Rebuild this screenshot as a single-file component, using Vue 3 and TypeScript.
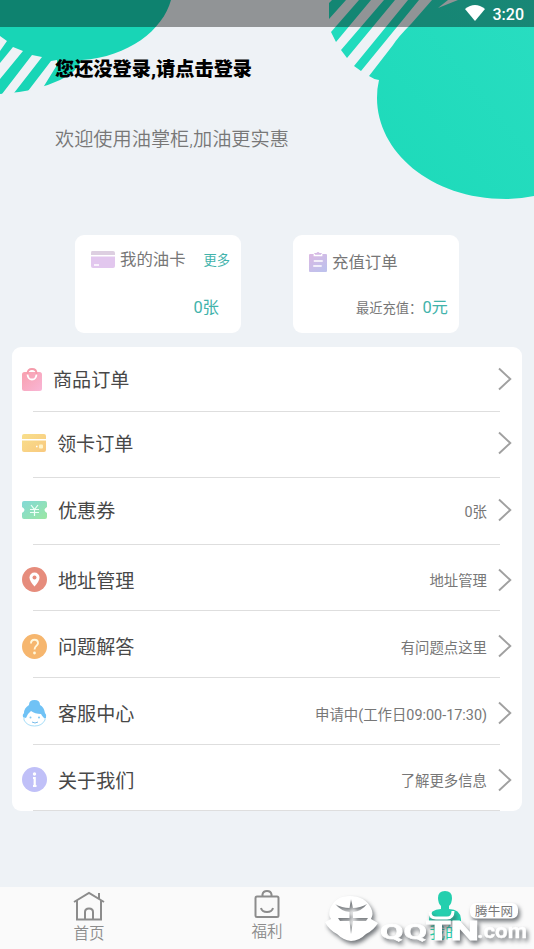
<script setup lang="ts">
interface Row {
  icon: string
  title: string
  note: string
}

const rows: Row[] = [
  { icon: 'bag', title: '商品订单', note: '' },
  { icon: 'card', title: '领卡订单', note: '' },
  { icon: 'coupon', title: '优惠券', note: '0张' },
  { icon: 'pin', title: '地址管理', note: '地址管理' },
  { icon: 'help', title: '问题解答', note: '有问题点这里' },
  { icon: 'service', title: '客服中心', note: '申请中(工作日09:00-17:30)' },
  { icon: 'info', title: '关于我们', note: '了解更多信息' },
]
</script>

<template>
  <div class="screen">
    <svg class="decor" width="534" height="220" viewBox="0 0 534 220">
      <defs>
        <linearGradient id="blob" x1="0" y1="1" x2="1" y2="0">
          <stop offset="0" stop-color="#1cdab9" />
          <stop offset="1" stop-color="#29ddc1" />
        </linearGradient>
      </defs>
      <path d="M0 0H171C163 30 128 57 82 60Q76 73 60 80Q35 92 0 94Z" fill="#18d5b6" />
      <path d="M0 36L7 41L0 51ZM13 47L23 51L0 79V63ZM32 55L42 57L14 93L13 96H0L2 94ZM51 61L57 60V65L44 86L43 90L28 91Z" fill="#eef2f6" />
      <path d="M329 3L332 0H346L329 19ZM331 32L336 42L371 0H359ZM341 50L347 58L395 0H384ZM354 66L361 71L419 0H408Z" fill="#20dbbd" />
      <path d="M432 0H534V196Q520 199 506 199C430 199 377 151 377 98Q377 88 379 80Q373 79 369 76L393 45Q398 37 411 24Z" fill="url(#blob)" />
      <path d="M438 8Q448 4 458 0H448Z" fill="#eef2f6" />
    </svg>

    <div class="status">
      <svg width="20" height="17" viewBox="0 0 20 17"><path d="M0 4Q10-4 20 4L10 16Z" fill="#fff" /></svg>
      <span>3:20</span>
    </div>

    <header class="hero">
      <h1>您还没登录,请点击登录</h1>
      <p>欢迎使用油掌柜,加油更实惠</p>
    </header>

    <section class="cards">
      <article class="tile">
        <div class="tile-head">
          <svg width="24" height="17" viewBox="0 0 24 17">
            <path d="M1 0H22Q24 0 24 2V4H0V2Q0 0 1 0Z" fill="#ddcfe1" />
            <path d="M0 5.500H24V15Q24 17 22 17H2Q0 17 0 15Z" fill="#e2c7ee" />
            <path d="M3 14H8" stroke="#fff" stroke-width="1.500" />
          </svg>
          <span class="tile-name">我的油卡</span>
          <a class="more">更多</a>
        </div>
        <div class="value">0张</div>
      </article>
      <article class="tile second">
        <div class="tile-head">
          <svg width="18" height="20" viewBox="0 0 17 20" preserveAspectRatio="none">
            <defs>
              <linearGradient id="clip" x1="0" y1="0" x2="0.6" y2="1">
                <stop offset="0" stop-color="#deb8e2" />
                <stop offset="1" stop-color="#bfc1ec" />
              </linearGradient>
            </defs>
            <path d="M1 2H5V1H7Q8.500 -1 10 1H12V2H16Q17 2 17 3V19Q17 20 16 20H1Q0 20 0 19V3Q0 2 1 2Z" fill="url(#clip)" />
            <path d="M5 2V3.500H12V2M4.500 9H13M4 14H12" fill="none" stroke="#fff" stroke-width="1.300" />
          </svg>
          <span class="tile-name">充值订单</span>
        </div>
        <div class="value"><small>最近充值：</small>0元</div>
      </article>
    </section>

    <main class="list">
      <div v-for="row in rows" :key="row.icon" class="row" :class="row.icon">
        <svg v-if="row.icon === 'bag'" class="icon" width="20" height="23" viewBox="0 0 20 23">
          <defs><linearGradient id="pink" x1="0" y1="0" x2="1" y2="1"><stop offset="0" stop-color="#f8a0ae" /><stop offset="1" stop-color="#f9b6d6" /></linearGradient></defs>
          <rect y="4" width="20" height="19" rx="2.500" fill="url(#pink)" />
          <path d="M5.500 7V5.500Q5.500 1 10 1T14.500 5.500V7" fill="none" stroke="#f59bab" stroke-width="1.800" />
          <path d="M5.500 6.500Q6 11.500 10 11.500T14.500 6.500" fill="none" stroke="#fff" stroke-width="1.800" />
        </svg>
        <svg v-else-if="row.icon === 'card'" class="icon" width="24" height="18" viewBox="0 0 24 18">
          <defs><linearGradient id="gold" x1="0" y1="0" x2="1" y2="1"><stop offset="0" stop-color="#f8df8c" /><stop offset="1" stop-color="#f9c97f" /></linearGradient></defs>
          <path d="M2 0H22Q24 0 24 2V5H0V2Q0 0 2 0ZM0 6.500H24V16Q24 18 22 18H2Q0 18 0 16Z" fill="url(#gold)" />
          <path d="M14 12.500H15.500" stroke="#fff" stroke-width="1.500" /><rect x="17" y="10.500" width="4" height="4" rx="1" fill="#fff5cb" />
        </svg>
        <svg v-else-if="row.icon === 'coupon'" class="icon" width="25" height="18" viewBox="0 0 25 18">
          <defs><linearGradient id="mint" x1="0" y1="0" x2="1" y2="1"><stop offset="0" stop-color="#83d9d7" /><stop offset="1" stop-color="#9be7a2" /></linearGradient></defs>
          <path d="M2 0H23Q25 0 25 2V6Q20 9 25 12V16Q25 18 23 18H2Q0 18 0 16V12Q5 9 0 6V2Q0 0 2 0Z" fill="url(#mint)" />
          <path d="M9 4L12.500 8.500L16 4M8 8.500H17M8 11.500H17M12.500 8.500V15" fill="none" stroke="#effff7" stroke-width="1.200" />
        </svg>
        <svg v-else-if="row.icon === 'pin'" class="icon" width="25" height="25" viewBox="0 0 25 25">
          <circle cx="12.500" cy="12.500" r="12.500" fill="#e68c7c" />
          <path d="M12.500 19.500Q7.500 14 7.500 10.500A5 5 0 0 1 17.500 10.500Q17.500 14 12.500 19.500Z" fill="#fff" /><circle cx="12.500" cy="10.500" r="2" fill="#e68c7c" />
        </svg>
        <svg v-else-if="row.icon === 'help'" class="icon" width="25" height="25" viewBox="0 0 25 25">
          <circle cx="12.500" cy="12.500" r="12.500" fill="#f6b66e" />
          <path d="M9 9.500Q9 5.800 12.500 5.800T16 9.300C16 11.500 12.500 12 12.500 15.500" fill="none" stroke="#fff8dd" stroke-width="1.900" /><circle cx="12.500" cy="19" r="1.400" fill="#fff8dd" />
        </svg>
        <svg v-else-if="row.icon === 'service'" class="icon" width="25" height="27" viewBox="0 0 25 27">
          <path d="M2 14V20Q5 26 12.500 26T23 20V14" fill="#fff" stroke="#91d4f5" stroke-width=".8" />
          <path d="M7 5Q7 0 12.500 0T18 5Q22 7 23 13Q25 15 24 18L22 18Q20 16 19 14Q13 14 9 11Q5 14 4 18L1 17Q0 15 2 13Q2 8 7 5Z" fill="#70c2f5" />
          <circle cx="8.500" cy="17.500" r="1" fill="#81c9f2" /><circle cx="17" cy="17.500" r="1" fill="#81c9f2" />
          <path d="M10 22Q13 24 16 22" fill="none" stroke="#75bae9" />
        </svg>
        <svg v-else class="icon" width="25" height="25" viewBox="0 0 25 25">
          <circle cx="12.500" cy="12.500" r="12.500" fill="#c0c0f8" />
          <circle cx="12.500" cy="7" r="1.700" fill="#fff" /><path d="M11 11H12.700V19M11 19H14.500" fill="none" stroke="#fff" stroke-width="2.200" />
        </svg>
        <span class="title">{{ row.title }}</span>
        <span class="note">{{ row.note }}</span>
        <svg class="arrow" width="14" height="24" viewBox="0 0 14 24"><path d="M1 1.500L12.300 12L1 22.500" fill="none" stroke="#a0a0a0" stroke-width="1.900" /></svg>
      </div>
    </main>

    <nav class="tabs">
      <a class="tab home">
        <svg width="32" height="31" viewBox="0 0 32 31" fill="none" stroke="#8c8c8c" stroke-width="2">
          <path d="M1 12L16 3L31 12M4 10V29.500H28V10M26 9V3M12 29V22Q12 18.500 16 18.500T20 22V29" />
        </svg>
        <span>首页</span>
      </a>
      <a class="tab">
        <svg width="26" height="30" viewBox="0 0 26 30" fill="none" stroke="#8c8c8c" stroke-width="2">
          <rect x="1.500" y="7.500" width="23" height="20.500" rx="1.500" /><path d="M8.500 7V5.500Q9 2 13 2T17.500 5.500V7M7 19Q8 23 13 23T19 19" />
        </svg>
        <span>福利</span>
      </a>
      <a class="tab mine">
        <svg width="34" height="32" viewBox="0 0 34 32">
          <path d="M17 1Q24 1 24 8Q24 13 21 16V19Q32 19 33 29V31H1V29Q2 19 13 19V16Q10 13 10 8Q10 1 17 1Z" fill="#23cfae" />
        </svg>
        <span>我的</span>
      </a>
    </nav>

    <svg class="watermark" width="210" height="60" viewBox="324 889 210 60">
      <g class="shadowed">
        <path fill-rule="evenodd" d="M325 922L331 919Q328 915 330 909Q335 896 350 896Q365 896 371 908Q374 914 371 919L378 923Q374 930 366 934Q359 941 351 941Q343 940 337 934Q329 930 325 922ZM351 899L349.500 908Q342 908 335 904Q341 911 349.500 912V918H338L340 921H349.500L351 934L353 921H366L368 918H353V912Q362 911 367 904Q360 908 353 908Z" fill="#fff" />
        <text class="brand" x="380" y="939" textLength="47" lengthAdjust="spacingAndGlyphs">QQ</text>
        <text class="brand tall" x="426" y="939.500" textLength="53" lengthAdjust="spacingAndGlyphs">TN</text>
        <text class="domain" x="477" y="938" textLength="50" lengthAdjust="spacingAndGlyphs">.com</text>
        <path d="M430 912Q430 918 436 918H447Q453 918 453 911" fill="none" stroke="#fff" stroke-width="3" />
        <rect x="470" y="903" width="48" height="15.500" rx="6" fill="#fff" />
      </g>
      <text class="site" x="475" y="915.500" textLength="38">腾牛网</text>
    </svg>
  </div>
</template>

<style>
body {
  margin: 0;
}
</style>

<style scoped>
.screen {
  position: relative;
  display: flex;
  flex-direction: column;
  box-sizing: border-box;
  width: 534px;
  height: 949px;
  overflow: hidden;
  background: #eef2f6;
  color: #777;
  font-family: Roboto, "Noto Sans CJK SC", sans-serif;
}
svg {
  display: block;
  flex: none;
}
.decor {
  position: absolute;
  left: 0;
  top: 0;
}
.status {
  position: relative;
  display: flex;
  justify-content: flex-end;
  align-items: center;
  gap: 8px;
  box-sizing: border-box;
  height: 27px;
  padding: 2px 10px 0 0;
  background: rgba(0, 0, 0, 0.39);
  color: #fff;
  font-size: 16px;
  font-weight: 500;
}
.status svg {
  margin-top: -2px;
}
.hero {
  position: relative;
  height: 208px;
  padding-left: 55px;
  box-sizing: border-box;
}
h1, p {
  margin: 0;
  font-size: 19.2px;
  line-height: 28px;
  white-space: nowrap;
}
h1 {
  padding-top: 29px;
  color: #000;
  font-weight: 900;
}
p {
  padding-top: 42px;
  font-weight: 350;
}
.cards {
  display: flex;
  gap: 52px;
  padding-left: 75px;
}
.tile {
  width: 166px;
  height: 98px;
  border-radius: 9px;
  background: #fff;
}
.tile-head {
  display: flex;
  align-items: center;
  height: 24px;
  padding: 12px 11px 0 16px;
  gap: 5px;
}
.second .tile-head {
  padding-top: 15px;
}
.tile-name {
  padding-top: 1px;
  font-size: 16.4px;
  line-height: 24px;
}
.more {
  margin-left: auto;
  color: #42b3ab;
  font-size: 13.3px;
}
.value {
  padding: 25px 22px 0 0;
  text-align: right;
  color: #42b3ab;
  font-size: 16.4px;
  line-height: 24px;
}
.second .value {
  padding: 22px 11px 0 0;
}
.value small {
  color: #777;
  font-size: 13.3px;
}
.list {
  display: grid;
  grid-template-rows: 65px 66px 67px 66px 67px 67px 66px;
  width: 510px;
  margin: 14px 0 0 12px;
  border-radius: 9px;
  background: #fff;
}
.row {
  display: flex;
  align-items: center;
  box-sizing: border-box;
  padding: 0 10px 1px 10px;
  background: linear-gradient(#dedede, #dedede) 21px 100% / 467px 1px no-repeat;
}
.card {
  padding-bottom: 4px;
}
.coupon {
  padding-bottom: 3px;
}
.pin, .help, .service, .info {
  padding-top: 4px;
}
.icon {
  margin-right: 11px;
}
.title {
  color: #484848;
  font-size: 19.1px;
}
.note {
  margin-left: auto;
  margin-right: 11px;
  font-size: 14.4px;
}
.tabs {
  display: grid;
  grid-template-columns: repeat(3, 178px);
  height: 62px;
  margin-top: auto;
  background: #fafafa;
}
.tab {
  display: flex;
  flex-direction: column;
  align-items: center;
  gap: 2px;
  padding-top: 2px;
  color: #8c8c8c;
  font-size: 15.5px;
  line-height: 23px;
  font-weight: 350;
}
.home {
  padding-top: 3px;
}
.mine {
  padding-top: 3px;
  color: #23cfae;
  font-weight: 400;
}
.mine span {
  margin-top: -2px;
}
.watermark {
  position: absolute;
  left: 324px;
  top: 889px;
}
.shadowed {
  filter: drop-shadow(2px 3px 2px rgba(70, 75, 80, 0.75));
}
.brand, .domain {
  fill: #fff;
  stroke: #fff;
  font-family: Roboto, sans-serif;
  font-weight: 700;
}
.brand {
  stroke-width: 0.6px;
  font-size: 21px;
}
.tall {
  stroke-width: 1px;
  font-size: 26px;
}
.domain {
  stroke-width: 0.3px;
  font-size: 20px;
}
.site {
  fill: #777;
  font-size: 12.5px;
}
</style>
